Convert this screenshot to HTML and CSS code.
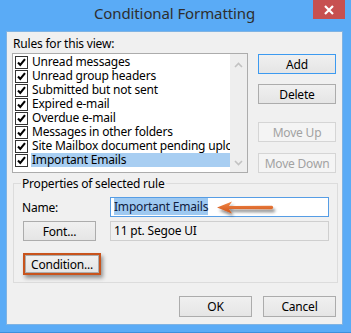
FILE: index.html
```html
<!DOCTYPE html>
<html lang="en">
<head>
  <meta charset="UTF-8">
  <title>Conditional Formatting</title>
  <link rel="stylesheet" href="styles.css">
</head>
<body>
  <div class="window">
    <div class="titlebar">
      <span class="title">Conditional Formatting</span>
      <div class="close">
        <svg width="10" height="10" viewBox="0 0 10 10">
          <path d="M1 1 L9 9 M9 1 L1 9" stroke="#fff" stroke-width="2.2" fill="none"/>
        </svg>
      </div>
    </div>

    <div class="client">
      <div class="caption">Rules for this view:</div>

      <div class="top">
        <div class="listbox">
          <div class="items" id="rule-list"></div>
          <div class="scrollbar">
            <svg width="9" height="6" viewBox="0 0 9 6"><path d="M1 5 L4.5 1.5 L8 5" stroke="#c2c2c2" stroke-width="1.6" fill="none"/></svg>
            <svg width="9" height="6" viewBox="0 0 9 6"><path d="M1 1 L4.5 4.5 L8 1" stroke="#c2c2c2" stroke-width="1.6" fill="none"/></svg>
          </div>
        </div>

        <div class="side-buttons">
          <button class="btn default add">Add</button>
          <button class="btn delete">Delete</button>
          <button class="btn disabled move-up">Move Up</button>
          <button class="btn disabled move-down">Move Down</button>
        </div>
      </div>

      <fieldset class="props">
        <legend>Properties of selected rule</legend>
        <div class="prop-row name-row">
          <span class="prop-label">Name:</span>
          <div class="field focused"><span class="selected-text">Important Emails</span></div>
        </div>
        <div class="prop-row font-row">
          <button class="btn font-btn">Font...</button>
          <div class="field readonly">11 pt. Segoe UI</div>
        </div>
        <div class="highlight-box">
          <button class="btn cond-btn">Condition...</button>
        </div>
      </fieldset>

      <div class="footer">
        <button class="btn">OK</button>
        <button class="btn">Cancel</button>
      </div>
    </div>

    <!-- callout arrow pointing at the name field -->
    <svg class="arrow" width="70" height="26" viewBox="0 0 70 26">
      <defs>
        <linearGradient id="ar" x1="0" y1="0" x2="0" y2="1">
          <stop offset="0" stop-color="#f2894a"/>
          <stop offset="1" stop-color="#cf5418"/>
        </linearGradient>
        <filter id="sh" x="-20%" y="-50%" width="140%" height="200%">
          <feDropShadow dx="2" dy="3" stdDeviation="1.6" flood-color="#000" flood-opacity="0.45"/>
        </filter>
      </defs>
      <g filter="url(#sh)">
        <path d="M3 9.5 L18 3.5 L15 8 L58 7.8 Q60.5 9.5 58 11.2 L15 11 L18 15.5 Z" fill="url(#ar)"/>
      </g>
    </svg>
  </div>

  <script>
    const rules = [
      "Unread messages",
      "Unread group headers",
      "Submitted but not sent",
      "Expired e-mail",
      "Overdue e-mail",
      "Messages in other folders",
      "Site Mailbox document pending upload",
      "Important Emails"
    ];

    const ruleList = document.getElementById('rule-list');

    rules.forEach((name, index) => {
      const row = document.createElement('div');
      row.className = 'item' + (index === rules.length - 1 ? ' selected' : '');
      row.innerHTML = `
        <span class="check"><svg width="11" height="11" viewBox="0 0 11 11"><path d="M2 5.5 L4.3 8 L9 2.2" stroke="#000" stroke-width="2.1" fill="none"/></svg></span>
        <span class="item-label">${name}</span>
      `;
      ruleList.appendChild(row);
    });
  </script>
</body>
</html>
```

FILE: styles.css
```css
body {
  margin: 0;
  padding: 0;
  font-family: 'Noto Sans', 'Open Sans', sans-serif;
  font-size: 12px;
  letter-spacing: -0.2px;
  color: #000;
}

.window {
  position: relative;
  width: 351px;
  height: 333px;
  background: #5aabf6;
  border-bottom: 1px solid #3d8fdc;
  box-sizing: border-box;
  overflow: hidden;
}

.titlebar {
  display: grid;
  grid-template-columns: 1fr auto 1fr;
  height: 31px;
}

.title {
  grid-column: 2;
  margin-top: 3px;
  margin-right: 2px;
  font-size: 15px;
  line-height: 20px;
  letter-spacing: -0.1px;
  color: #2e2e2e;
}

.close {
  grid-column: 3;
  justify-self: end;
  margin-right: 6px;
  width: 32px;
  height: 19px;
  background: #c75050;
  display: flex;
  align-items: center;
  justify-content: center;
}

.client {
  margin-left: 6px;
  width: 337px;
  height: 294px;
  box-sizing: border-box;
  background: #f0f0f0;
  border: 1px solid #7fb3e3;
  padding: 4px 6px 0 5px;
}

.caption {
  line-height: 15px;
  padding-left: 1px;
}

.top {
  display: flex;
  margin-top: 2px;
}

.listbox {
  width: 236px;
  height: 120px;
  box-sizing: border-box;
  border: 1px solid #acacac;
  background: #fff;
  display: flex;
}

.items {
  flex: 1;
  min-width: 0;
  padding: 1px 0 0 2px;
  overflow: hidden;
}

.item {
  display: flex;
  height: 14px;
  align-items: center;
  white-space: nowrap;
}

.check {
  width: 11px;
  height: 11px;
  border: 1px solid #333;
  background: #fff;
  flex: 0 0 auto;
  display: flex;
}

.item-label {
  flex: 1;
  margin-left: 3px;
  padding-left: 1px;
  line-height: 14px;
}

.item.selected .item-label {
  background: #a8cef2;
}

.scrollbar {
  width: 17px;
  flex: 0 0 auto;
  background: #eeeeee;
  display: flex;
  flex-direction: column;
  justify-content: space-between;
  align-items: center;
  padding: 8px 0 6px;
  box-sizing: border-box;
}

.side-buttons {
  display: flex;
  flex-direction: column;
  margin-left: 10px;
  width: 78px;
}

.btn {
  font-family: inherit;
  font-size: 12px;
  letter-spacing: -0.2px;
  color: #000;
  height: 20px;
  padding: 0;
  border: 1px solid #acacac;
  background: linear-gradient(#f0f0f0, #e5e5e5);
  box-sizing: border-box;
}

.btn.default {
  border-color: #3c9af0;
}

.btn.disabled {
  color: #a2a2a2;
  border-color: #d5d5d5;
  background: #f4f4f4;
}

.add { margin-top: 1px; }
.delete { margin-top: 10px; }
.move-up { margin-top: 18px; }
.move-down { margin-top: 11px; }

.props {
  margin: 3px 0 0 1px;
  width: 325px;
  height: 107px;
  box-sizing: border-box;
  border: 1px solid #dcdcdc;
  padding: 0 8px;
}

.props legend {
  padding: 0 1px;
  margin-left: -1px;
  line-height: 15px;
}

.prop-row {
  display: grid;
  grid-template-columns: 88px 1fr;
  align-items: center;
}

.name-row {
  margin-top: 6px;
}

.font-row {
  margin-top: 4px;
}

.field {
  height: 20px;
  box-sizing: border-box;
  border: 1px solid #cfcfcf;
  padding: 0 3px;
  line-height: 18px;
  white-space: nowrap;
}

.field.focused {
  border-color: #569de5;
  background: #fff;
}

.selected-text {
  background: #9ec9f1;
  color: #102040;
}

.field.readonly {
  background: #f0f0f0;
}

.font-btn {
  width: 73px;
  margin-left: 1px;
}

.highlight-box {
  margin-top: 12px;
  margin-left: 1px;
  width: 78px;
  height: 22px;
  box-sizing: border-box;
  border: 2px solid #c8531c;
  box-shadow: 2px 3px 4px rgba(0, 0, 0, 0.4);
}

.cond-btn {
  width: 74px;
  height: 18px;
  display: block;
  text-align: left;
  padding-left: 5px;
}

.footer {
  display: flex;
  justify-content: flex-end;
  gap: 11px;
  margin-top: 13px;
}

.footer .btn {
  width: 73px;
  height: 21px;
}

.arrow {
  position: absolute;
  left: 214px;
  top: 198px;
}
```
